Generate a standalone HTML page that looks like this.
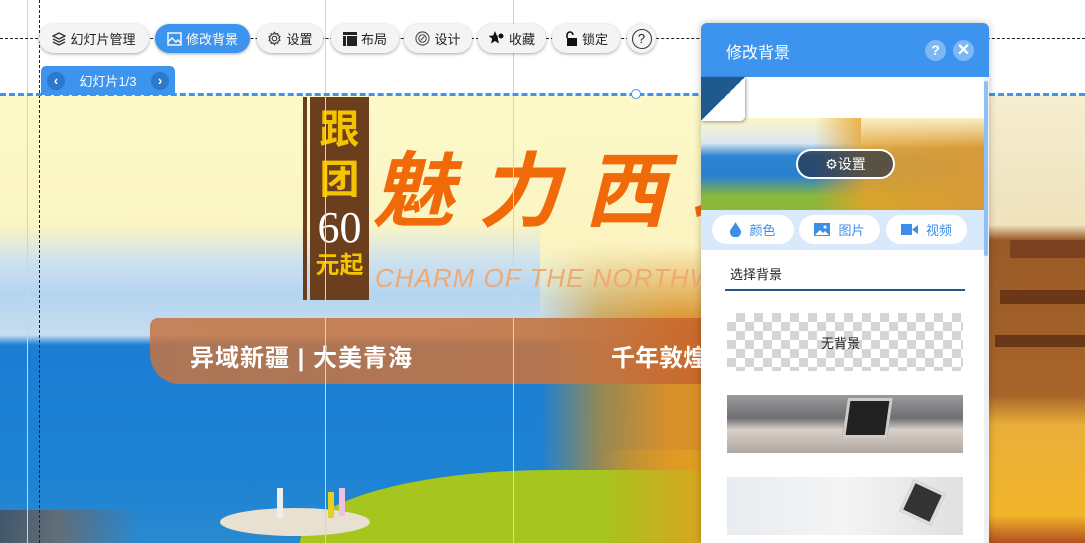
<!DOCTYPE html>
<html><head><meta charset="utf-8"><style>
*{margin:0;padding:0;box-sizing:border-box}
body{width:1085px;height:543px;overflow:hidden;background:#fff;position:relative;font-family:"Liberation Sans","Noto Sans CJK SC",sans-serif}
.a{position:absolute}
.btn{position:absolute;top:24px;height:29px;border-radius:15px;background:#f4f4f4;box-shadow:0 1px 3px rgba(0,0,0,.35);font-size:13px;color:#222;display:flex;align-items:center;justify-content:center;gap:4px}
.btn.on{background:#3d94ee;color:#fff}
.pill{position:absolute;top:215px;height:29px;background:#fff;border-radius:15px;color:#3d8ee8;font-size:13px;display:flex;align-items:center;justify-content:center;gap:8px}
</style></head><body>
<!-- slide background -->
<div class="a" style="left:0;top:95px;width:1085px;height:448px;background:linear-gradient(180deg,#fdf9c9 0,#fbf5c4 130px,#cfe2ee 165px,#b4d4f0 200px,#c8ddef 240px,#1c7ed3 250px,#1d82d4 380px,#2a8ad0 448px)"></div>
<!-- right desert -->
<div class="a" style="left:540px;top:95px;width:545px;height:448px;background:linear-gradient(90deg,rgba(220,140,30,0),rgba(200,140,30,.7) 60px,#d8902a 130px)"></div>
<div class="a" style="left:540px;top:95px;width:545px;height:230px;background:linear-gradient(180deg,#fdf9c9 0,#fbf3c0 150px,rgba(251,243,192,0))"></div>
<!-- grass -->
<div class="a" style="left:300px;top:470px;width:420px;height:73px;background:#a6c51f;border-radius:60% 0 0 0/100% 0 0 0"></div>
<div class="a" style="left:600px;top:450px;width:120px;height:93px;background:linear-gradient(90deg,rgba(166,197,31,0),#e0a020)"></div>
<div class="a" style="left:220px;top:508px;width:150px;height:28px;background:#e8e0d0;border-radius:50%"></div>
<!-- brush band -->
<div class="a" style="left:150px;top:318px;width:560px;height:66px;background:linear-gradient(90deg,rgba(196,116,66,.85),rgba(196,116,66,.9) 80%,rgba(200,100,40,.9));border-radius:8px 0 0 30px"></div>
<div class="a" style="left:190px;top:338px;font-size:24px;font-weight:bold;color:#fff;letter-spacing:1px">异域新疆 | 大美青海</div>
<div class="a" style="left:611px;top:338px;font-size:24px;font-weight:bold;color:#fff">千年敦煌</div>
<!-- title -->
<div class="a" style="left:303px;top:97px;width:4px;height:203px;background:#6b3e1e"></div>
<div class="a" style="left:310px;top:97px;width:59px;height:203px;background:#6b3e1e;text-align:center">
<div style="color:#f5c400;font-size:40px;font-weight:bold;line-height:50px;margin-top:8px">跟</div>
<div style="color:#f5c400;font-size:40px;font-weight:bold;line-height:50px">团</div>
<div style="color:#fff;font-size:44px;font-family:'Liberation Serif',serif;line-height:46px">60</div>
<div style="color:#f5c400;font-size:24px;font-weight:bold;line-height:30px">元起</div>
</div>
<div class="a" style="left:372px;top:125px;font-size:82px;color:#f06a0a;font-family:'Liberation Sans','Noto Sans CJK SC',sans-serif;font-style:italic;font-weight:bold;letter-spacing:24px;white-space:nowrap">魅力西北</div>
<div class="a" style="left:375px;top:263px;font-size:26px;color:#eeaa75;font-style:italic;white-space:nowrap;letter-spacing:1px">CHARM OF THE NORTHWEST</div>
<!-- people -->
<div class="a" style="left:277px;top:488px;width:6px;height:30px;background:#eee"></div>
<div class="a" style="left:328px;top:492px;width:6px;height:26px;background:#e5d020"></div>
<div class="a" style="left:339px;top:488px;width:6px;height:28px;background:#f0c0e0"></div>
<div class="a" style="left:0;top:510px;width:140px;height:33px;background:linear-gradient(90deg,#503828,#8a5a3a 40%,rgba(40,120,200,0) 100%);opacity:.6"></div>
<!-- right scene pagoda -->
<div class="a" style="left:989px;top:95px;width:96px;height:448px;background:linear-gradient(180deg,#f6eed0 0,#efe2bc 130px,#9a5a28 145px,#a8652a 300px,#e9ae3a 330px,#f3b52a 420px,#b05020 448px)"></div>
<div class="a" style="left:1010px;top:240px;width:75px;height:18px;background:#7a4220"></div>
<div class="a" style="left:1000px;top:290px;width:85px;height:14px;background:#6a3818"></div>
<div class="a" style="left:995px;top:335px;width:90px;height:12px;background:#6a3818"></div>
<!-- guides -->
<div class="a" style="left:27px;top:0;width:1px;height:543px;background:#9ee8f0"></div>
<div class="a" style="left:325px;top:0;width:1px;height:543px;background:#9ee8f0"></div>
<div class="a" style="left:513px;top:0;width:1px;height:543px;background:#9ee8f0"></div>
<div class="a" style="left:39px;top:0;width:0;height:543px;border-left:1px dashed #222"></div>
<div class="a" style="left:0;top:38px;width:1085px;height:0;border-top:1px dashed #222"></div>
<div class="a" style="left:0;top:93px;width:1085px;height:0;border-top:3px dashed #3d94ee"></div>
<div class="a" style="left:631px;top:89px;width:10px;height:10px;border-radius:50%;border:1.5px solid #3d94ee;background:#fff"></div>
<!-- toolbar -->
<div class="btn" style="left:39px;width:110px"><svg width="14" height="14" viewBox="0 0 14 14" fill="none" stroke="#333" stroke-width="1.3"><path d="M7 1L1 4l6 3 6-3z"/><path d="M1 7l6 3 6-3M1 10l6 3 6-3"/></svg>幻灯片管理</div>
<div class="btn on" style="left:155px;width:95px"><svg width="15" height="14" viewBox="0 0 15 14" fill="none" stroke="#fff" stroke-width="1.4"><rect x="1" y="1" width="13" height="12"/><path d="M1 10l4-4 4 4 2-2 3 3"/></svg>修改背景</div>
<div class="btn" style="left:257px;width:66px"><svg width="15" height="15" viewBox="0 0 16 16" fill="none" stroke="#333" stroke-width="1.2"><circle cx="8" cy="8" r="2.5"/><path d="M8 1.5l1.3 1.8 2.2-.6.3 2.2 2 1-1 2 1 2-2 1-.3 2.2-2.2-.6L8 14.5l-1.3-1.8-2.2.6-.3-2.2-2-1 1-2-1-2 2-1 .3-2.2 2.2.6z"/></svg>设置</div>
<div class="btn" style="left:331px;width:68px"><svg width="14" height="14" viewBox="0 0 14 14"><rect x="0" y="0" width="14" height="3" fill="#222"/><rect x="0" y="4" width="3" height="10" fill="#222"/><rect x="4" y="4" width="10" height="10" fill="#222"/></svg>布局</div>
<div class="btn" style="left:404px;width:68px"><svg width="15" height="15" viewBox="0 0 16 16" fill="none" stroke="#444" stroke-width="1.1"><circle cx="8" cy="8" r="7"/><circle cx="8" cy="8" r="4"/><path d="M6 10l4-4"/></svg>设计</div>
<div class="btn" style="left:478px;width:68px"><svg width="16" height="15" viewBox="0 0 16 15"><path d="M6 0l1.8 4.5 4.7.3-3.7 3 1.2 4.7L6 10 2 12.5l1.2-4.7L-.5 4.8l4.7-.3z" fill="#111"/><circle cx="12" cy="5" r="3" fill="#111" stroke="#f4f4f4"/></svg>收藏</div>
<div class="btn" style="left:552px;width:68px"><svg width="14" height="15" viewBox="0 0 14 15"><path d="M3 7V4a3 3 0 016 0" fill="none" stroke="#111" stroke-width="1.6"/><rect x="3" y="7" width="10" height="8" fill="#111"/></svg>锁定</div>
<div class="btn" style="left:627px;width:29px"><span style="width:20px;height:20px;border:1px solid #333;border-radius:50%;font-size:13px;display:flex;align-items:center;justify-content:center">?</span></div>
<!-- slide tab -->
<div class="a" style="left:41px;top:66px;width:134px;height:29px;background:#3d94ee;border-radius:5px 5px 0 0;color:#fff;font-size:13px;display:flex;align-items:center;justify-content:space-between;padding:0 6px">
<span style="width:18px;height:18px;border-radius:50%;background:#2c78cc;display:flex;align-items:center;justify-content:center;font-weight:bold">‹</span>幻灯片1/3<span style="width:18px;height:18px;border-radius:50%;background:#2c78cc;display:flex;align-items:center;justify-content:center;font-weight:bold">›</span></div>
<!-- panel -->
<div class="a" style="left:701px;top:23px;width:288px;height:520px;background:#fff;border-radius:6px 6px 0 0;box-shadow:0 0 8px rgba(0,0,0,.25);overflow:hidden">
<div class="a" style="left:0;top:0;width:288px;height:54px;background:#3d94ee"></div>
<div class="a" style="left:25px;top:16px;color:#fff;font-size:16px">修改背景</div>
<div class="a" style="left:224px;top:17px;width:21px;height:21px;border-radius:50%;background:#7db7f4;color:#fff;font-size:14px;font-weight:bold;text-align:center;line-height:21px">?</div>
<div class="a" style="left:252px;top:17px;width:21px;height:21px;border-radius:50%;background:#7db7f4;color:#fff;font-size:16px;font-weight:bold;text-align:center;line-height:21px">✕</div>
<!-- preview image -->
<div class="a" style="left:0;top:95px;width:283px;height:92px;background:linear-gradient(90deg,rgba(0,0,0,0) 40%,rgba(230,160,40,.85) 58%,#d89a38 100%),linear-gradient(180deg,#fbf5c8 0,#dbe8f0 25px,#2d84d0 38px,#2a80d0 58px,#8ab83a 78px)"></div>
<div class="a" style="left:160px;top:95px;width:123px;height:30px;background:linear-gradient(180deg,#f8f0c8,rgba(248,240,200,0))"></div>
<div class="a" style="left:0;top:54px;width:44px;height:44px;background:linear-gradient(135deg,#1f5a8f 50%,#fff 50%);border-radius:0 0 5px 0;box-shadow:1px 1px 3px rgba(0,0,0,.4)"></div>
<div class="a" style="left:95px;top:126px;width:99px;height:30px;border:2px solid #fff;border-radius:15px;background:rgba(40,50,70,.7);color:#fff;font-size:14px;display:flex;align-items:center;justify-content:center">⚙设置</div>
<div class="a" style="left:0;top:187px;width:283px;height:40px;background:#d7e9fb"></div>
<div class="a" style="left:283px;top:54px;width:5px;height:466px;background:#f0f0f0"></div>
<div class="a" style="left:283px;top:58px;width:4px;height:175px;background:#8ebff5;border-radius:2px"></div>
</div>
<div class="pill" style="left:712px;width:82px"><svg width="11" height="15" viewBox="0 0 11 15"><path d="M5.5 0C3 5 0 7 0 10a5.5 5.5 0 0011 0c0-3-3-5-5.5-10z" fill="#3d8ee8"/></svg>颜色</div>
<div class="pill" style="left:799px;width:81px"><svg width="16" height="13" viewBox="0 0 16 13"><rect width="16" height="13" fill="#3d8ee8"/><path d="M1 12l5-5 3 3 2-2 4 4z" fill="#fff"/><circle cx="11" cy="4" r="1.5" fill="#fff"/></svg>图片</div>
<div class="pill" style="left:886px;width:81px"><svg width="17" height="11" viewBox="0 0 17 11"><rect width="11" height="11" fill="#3d8ee8"/><path d="M11 5.5L17 1v9z" fill="#3d8ee8"/></svg>视频</div>
<div class="a" style="left:730px;top:264px;font-size:13px;color:#222">选择背景</div>
<div class="a" style="left:725px;top:289px;width:240px;height:2px;background:#1f5a8f"></div>
<div class="a" style="left:727px;top:313px;width:236px;height:58px;background-color:#fff;background-image:linear-gradient(45deg,#d5d5d5 25%,transparent 25%,transparent 75%,#d5d5d5 75%),linear-gradient(45deg,#d5d5d5 25%,transparent 25%,transparent 75%,#d5d5d5 75%);background-size:18px 18px;background-position:0 0,9px 9px"></div>
<div class="a" style="left:821px;top:333px;font-size:13px;color:#222">无背景</div>
<div class="a" style="left:727px;top:395px;width:236px;height:58px;background:linear-gradient(180deg,#9a9a9c 0,#6f6f72 40%,#d8d0c8 60%,#b0a8a0)"></div>
<div class="a" style="left:845px;top:398px;width:45px;height:40px;background:#222;border:3px solid #ccc;transform:skewX(-8deg)"></div>
<div class="a" style="left:727px;top:477px;width:236px;height:58px;background:linear-gradient(90deg,#e8ecf0,#f4f4f4 50%,#e0e0e0)"></div>
<div class="a" style="left:905px;top:485px;width:35px;height:35px;background:#333;border:3px solid #ddd;transform:rotate(25deg)"></div>
</body></html>
